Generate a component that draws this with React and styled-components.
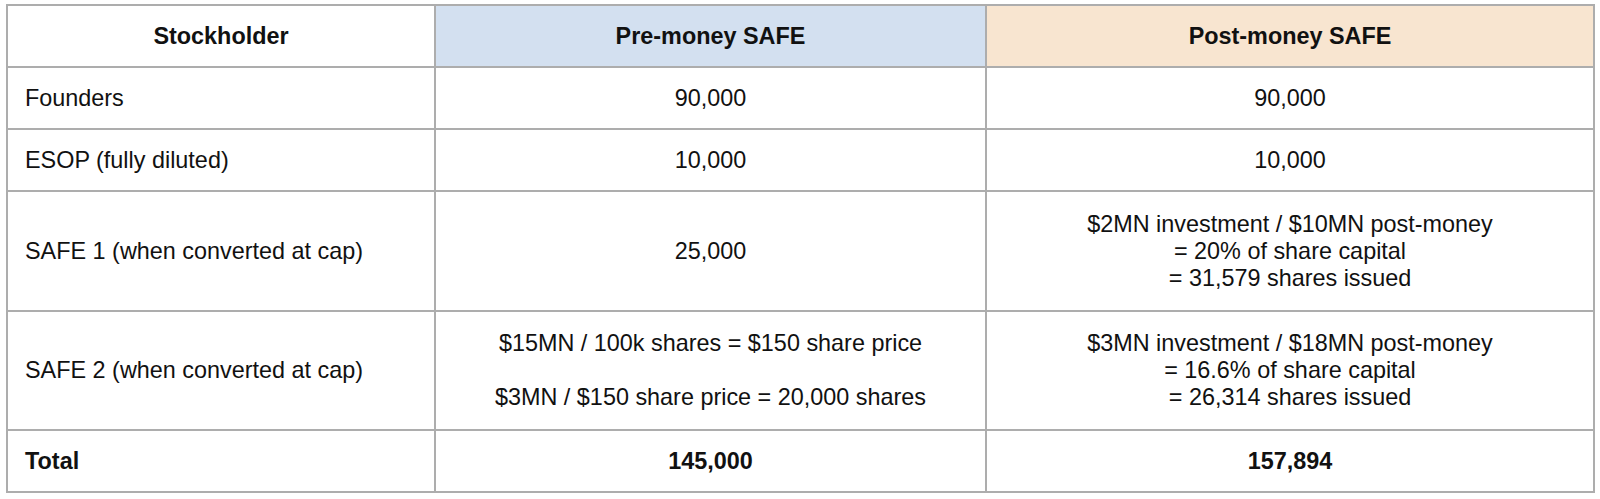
import React from "react";
import styled, { createGlobalStyle } from "styled-components";

const GlobalStyle = createGlobalStyle`
  html, body {
    margin: 0;
    padding: 0;
    background: #ffffff;
  }
  body {
    font-family: "Liberation Sans", Arial, sans-serif;
    color: #000;
  }
`;

const Page = styled.div`
  padding: 4px 0 0 6px;
  width: 1600px;
  height: 499px;
  box-sizing: border-box;
  overflow: hidden;
`;

const Table = styled.table`
  width: 1587px;
  border-collapse: collapse;
  table-layout: fixed;
  font-size: 23.4px;
  line-height: 27px;
`;

const Row = styled.tr`
  height: ${({ h }) => h}px;
`;

const Cell = styled.td`
  border: 2px solid #adadad;
  padding: 0 17px;
  vertical-align: middle;
  text-align: ${({ align }) => align || "center"};
  font-weight: ${({ bold }) => (bold ? 700 : 400)};
  color: #111;
  background: ${({ tone }) =>
    tone === "blue" ? "#d3e0f0" : tone === "peach" ? "#f8e5d0" : "transparent"};
`;

const HeadCell = styled(Cell).attrs({ as: "th" })`
  font-weight: 700;
`;

const Line = styled.div`
  white-space: nowrap;
`;

const Gap = styled.div`
  height: 27px;
`;

const rows = [
  { h: 62, name: "Founders", pre: ["90,000"], post: ["90,000"] },
  { h: 62, name: "ESOP (fully diluted)", pre: ["10,000"], post: ["10,000"] },
  {
    h: 120,
    name: "SAFE 1 (when converted at cap)",
    pre: ["25,000"],
    post: [
      "$2MN investment / $10MN post-money",
      "= 20% of share capital",
      "= 31,579 shares issued",
    ],
  },
  {
    h: 119,
    name: "SAFE 2 (when converted at cap)",
    pre: ["$15MN / 100k shares = $150 share price", null, "$3MN / $150 share price = 20,000 shares"],
    post: [
      "$3MN investment / $18MN post-money",
      "= 16.6% of share capital",
      "= 26,314 shares issued",
    ],
  },
];

const Lines = ({ items }) =>
  items.map((t, i) => (t === null ? <Gap key={i} /> : <Line key={i}>{t}</Line>));

export default function App() {
  return (
    <Page>
      <GlobalStyle />
      <Table>
        <colgroup>
          <col style={{ width: 428 }} />
          <col style={{ width: 551 }} />
          <col style={{ width: 608 }} />
        </colgroup>
        <thead>
          <Row h={62}>
            <HeadCell>Stockholder</HeadCell>
            <HeadCell tone="blue">Pre-money SAFE</HeadCell>
            <HeadCell tone="peach">Post-money SAFE</HeadCell>
          </Row>
        </thead>
        <tbody>
          {rows.map((r) => (
            <Row h={r.h} key={r.name}>
              <Cell align="left">{r.name}</Cell>
              <Cell>
                <Lines items={r.pre} />
              </Cell>
              <Cell>
                <Lines items={r.post} />
              </Cell>
            </Row>
          ))}
          <Row h={62}>
            <Cell align="left" bold>
              Total
            </Cell>
            <Cell bold>145,000</Cell>
            <Cell bold>157,894</Cell>
          </Row>
        </tbody>
      </Table>
    </Page>
  );
}
